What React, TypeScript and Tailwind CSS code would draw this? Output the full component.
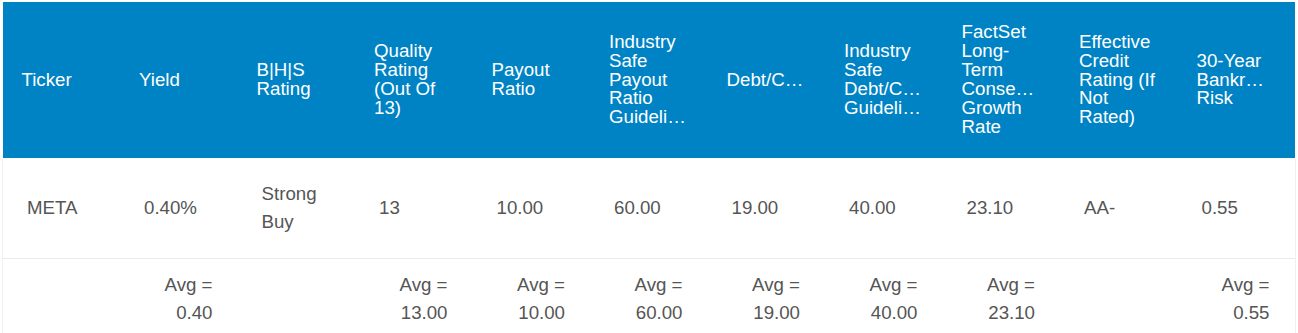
const headers: string[][] = [
  ['Ticker'],
  ['Yield'],
  ['B|H|S', 'Rating'],
  ['Quality', 'Rating', '(Out Of', '13)'],
  ['Payout', 'Ratio'],
  ['Industry', 'Safe', 'Payout', 'Ratio', 'Guideli…'],
  ['Debt/C…'],
  ['Industry', 'Safe', 'Debt/C…', 'Guideli…'],
  ['FactSet', 'Long-', 'Term', 'Conse…', 'Growth', 'Rate'],
  ['Effective', 'Credit', 'Rating (If', 'Not', 'Rated)'],
  ['30-Year', 'Bankr…', 'Risk'],
]

const row = ['META', '0.40%', 'Strong Buy', '13', '10.00', '60.00', '19.00', '40.00', '23.10', 'AA-', '0.55']

const averages = ['', '0.40', '', '13.00', '10.00', '60.00', '19.00', '40.00', '23.10', '', '0.55']

export default function App() {
  return (
    <div className="bg-white w-[1298px] h-[333px] overflow-hidden pt-[2px] pl-[2px]" style={{ fontFamily: '"Liberation Sans", Arial, sans-serif' }}>
      <table className="table-fixed border-collapse w-[1292.5px] text-[18.7px]">
        <colgroup>
          {headers.map((_, i) => (
            <col key={i} className="w-[117.5px]" />
          ))}
        </colgroup>
        <thead>
          <tr className="bg-[#0083c4] h-[156px]">
            {headers.map((lines, i) => (
              <th key={i} className="pl-[19px] pr-5 align-middle text-left font-normal text-white leading-[18.9px]">
                {lines.map((l, j) => (
                  <div key={j} className="whitespace-nowrap">{l}</div>
                ))}
              </th>
            ))}
          </tr>
        </thead>
        <tbody className="text-[#555555] leading-[28px]">
          <tr className="h-[100px] border-b border-[#e9e9ef]">
            {row.map((v, i) => (
              <td
                key={i}
                className={`pl-6 pr-[25px] py-[22px] align-middle ${i === 0 ? 'border-l border-[#f0f0f2]' : ''} ${i === row.length - 1 ? 'border-r border-[#f0f0f2]' : ''}`}
              >
                {v}
              </td>
            ))}
          </tr>
          <tr>
            {averages.map((v, i) => (
              <td
                key={i}
                className={`px-[25px] pt-3 pb-3 align-top text-right ${i === 0 ? 'border-l border-[#f0f0f2]' : ''} ${i === averages.length - 1 ? 'border-r border-[#f0f0f2]' : ''}`}
              >
                {v && (
                  <>
                    <div>Avg =</div>
                    <div>{v}</div>
                  </>
                )}
              </td>
            ))}
          </tr>
        </tbody>
      </table>
    </div>
  )
}
